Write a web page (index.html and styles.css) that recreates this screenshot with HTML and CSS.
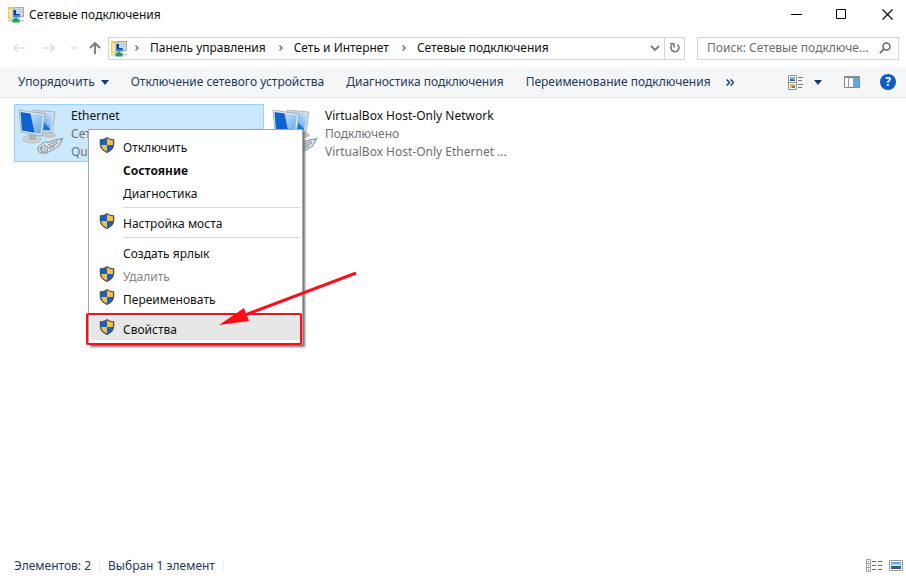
FILE: index.html
```html
<!DOCTYPE html>
<html lang="ru">
<head>
<meta charset="utf-8">
<title>Сетевые подключения</title>
<link rel="stylesheet" href="styles.css">
</head>
<body>
<svg class="defs" aria-hidden="true">
  <defs>
    <linearGradient id="screen" x1="0" y1="1" x2="1" y2="0">
      <stop offset="0" stop-color="#0b62d0"/><stop offset=".45" stop-color="#1a78df"/><stop offset=".5" stop-color="#7db9f3"/><stop offset="1" stop-color="#d4eaff"/>
    </linearGradient>
    <linearGradient id="pane" x1="0" y1="0" x2="1" y2="1">
      <stop offset="0" stop-color="#e4f2ff"/><stop offset="1" stop-color="#5ba4ee"/>
    </linearGradient>
    <linearGradient id="photo" x1="0" y1="0" x2="0" y2="1">
      <stop offset="0" stop-color="#3c96ee"/><stop offset=".5" stop-color="#c9e4fa"/><stop offset=".6" stop-color="#44586a"/><stop offset="1" stop-color="#1d5c92"/>
    </linearGradient>
    <symbol id="netfolder" viewBox="0 0 16 17">
      <path d="M0 1h5l1 1v11H0z" fill="#f3c463"/><path d="M1 3h3v9H1z" fill="#fde3a0"/>
      <path d="M6.500 1.500h9v9h-9z" fill="#d9d5c9" stroke="#a4a7a2"/><path d="M4 3h9v9H4z" fill="#c9cbc8"/>
      <path d="M5 4h7v7H5z" fill="#2f86df"/><path d="M6 4h5v5H6z" fill="#0d3f98"/><path d="M8 4h4v4H8z" fill="#b6dafa"/>
      <path d="M0 14h16v1.500H0z" fill="#c5cbc8"/><path d="M6.500 11.500h3v1.500h2V16.500h-7V13h2z" fill="#16a566"/>
    </symbol>
    <symbol id="shield" viewBox="0 0 16 16">
      <path d="M8 .8C6 2.300 3.800 2.800 1.400 2.900V7c0 4 2.800 6.800 6.600 8.300C11.800 13.800 14.600 11 14.600 7V2.900C12.200 2.800 10 2.300 8 .8z" fill="#ffbd38"/>
      <path d="M8 1v7H1.500V3C4 2.800 6 2.400 8 1zM8 8h6.500c-.4 3.500-3 6-6.500 7.200z" fill="#1063cc"/>
      <path d="M8 .8C6 2.300 3.800 2.800 1.400 2.900V7c0 4 2.800 6.800 6.600 8.300C11.800 13.800 14.600 11 14.600 7V2.900C12.200 2.800 10 2.300 8 .8z" fill="none" stroke="#4d5155" stroke-width="1.300"/>
    </symbol>
    <symbol id="computers" viewBox="0 0 48 48">
      <ellipse cx="31" cy="26" rx="7" ry="3" fill="#c4c8ca"/>
      <path d="M15 1l22 2-3 21-16-2z" fill="#d4dadd" stroke="#9aa5ad" stroke-width=".7"/><path d="M16 3l19 1.500-3 17-14-1z" fill="url(#screen)"/>
      <ellipse cx="14" cy="30" rx="9" ry="4" fill="#ccd0d1" stroke="#a2a8ab" stroke-width=".6"/><path d="M11 25l7 1v5h-7z" fill="#aeb6ba"/>
      <path d="M1 1l26 4-3 22L3 23z" fill="#e4e8ea" stroke="#8f9ba4" stroke-width=".7"/><path d="M2.500 3l22.500 3.300-2.500 18.500L4 21.500z" fill="url(#pane)"/><path d="M2.500 3l10 1.500 4 19.200L4 21.500z" fill="#0f62cf"/>
      <path d="M33 34l13-6-4 7-6 3z" fill="#58aef0"/>
      <path d="M20 38l6-5 5 0 9-3 4 1-3 6-12 7-7 0-2-3z" fill="#dde4e8" stroke="#7c878e" stroke-width=".9"/>
      <path d="M22 39l4-3 4 2-1 5-5 0zM30 36l10-4M31 38l9-4M31 40l6-3M24 38v4M27 38v4" fill="none" stroke="#7b8891" stroke-width=".9"/>
    </symbol>
    <symbol id="crumb" viewBox="0 0 6 8"><path d="M1.500 1.500L4 4 1.500 6.500" fill="none" stroke="#777" stroke-width="1.500"/></symbol>
    <symbol id="down" viewBox="0 0 8 5"><path d="M0 0h8L4 5z" fill="#173b70"/></symbol>
  </defs>
</svg>
<div class="window">
  <header class="titlebar">
    <svg class="folder"><use href="#netfolder"/></svg>
    <h1>Сетевые подключения</h1>
    <div class="caption">
      <button aria-label="Свернуть"><svg viewBox="0 0 11 11"><path d="M0 5.500h11" stroke="#000"/></svg></button>
      <button aria-label="Развернуть"><svg viewBox="0 0 11 11"><path d="M.5.5h9v9h-9z" fill="none" stroke="#000"/></svg></button>
      <button aria-label="Закрыть"><svg viewBox="0 0 11 11"><path d="M.5.5l10 10M10.500.5l-10 10" stroke="#000" stroke-width="1.200"/></svg></button>
    </div>
  </header>
  <nav class="navbar">
    <div class="history">
      <button aria-label="Назад" disabled><svg width="12" height="10" viewBox="0 0 12 10"><path d="M12 5H1M5 1L1 5l4 4" fill="none" stroke="#dfdfdf" stroke-width="1.600"/></svg></button>
      <button aria-label="Вперёд" disabled><svg width="12" height="10" viewBox="0 0 12 10"><path d="M0 5h11M7 1l4 4-4 4" fill="none" stroke="#dfdfdf" stroke-width="1.600"/></svg></button>
      <button class="recent" aria-label="Недавние" disabled><svg width="6" height="4" viewBox="0 0 6 4"><path d="M.5.5L3 3 5.500.5" fill="none" stroke="#ddd" stroke-width="1.300"/></svg></button>
      <button aria-label="Вверх"><svg width="12" height="12" viewBox="0 0 12 12"><path d="M6 12V1M1 6l5-5 5 5" fill="none" stroke="#777" stroke-width="1.800"/></svg></button>
    </div>
    <div class="address">
      <svg class="folder"><use href="#netfolder"/></svg>
      <svg class="crumb"><use href="#crumb"/></svg><a href="#">Панель управления</a>
      <svg class="crumb"><use href="#crumb"/></svg><a href="#">Сеть и Интернет</a>
      <svg class="crumb"><use href="#crumb"/></svg><a href="#">Сетевые подключения</a>
      <button class="expand" aria-label="Предыдущие расположения"><svg width="10" height="7" viewBox="0 0 10 7"><path d="M1 1l4 4 4-4" fill="none" stroke="#777" stroke-width="1.900"/></svg></button>
      <button class="refresh" aria-label="Обновить"><svg width="12" height="12" viewBox="0 0 12 12"><path d="M8.500 2.600A4 4 0 1 1 3 3" fill="none" stroke="#777" stroke-width="1.600"/><path d="M1 1.700h4v4" fill="none" stroke="#777" stroke-width="1.500"/></svg></button>
    </div>
    <div class="search">
      <input type="text" aria-label="Поиск" placeholder="Поиск: Сетевые подключе...">
      <svg width="12" height="12" viewBox="0 0 12 12"><circle cx="7.500" cy="4.500" r="3.500" fill="none" stroke="#666" stroke-width="1.500"/><path d="M5 7L.8 11.200" stroke="#666" stroke-width="1.700"/></svg>
    </div>
  </nav>
  <div class="toolbar">
    <button>Упорядочить<svg width="8" height="5"><use href="#down"/></svg></button>
    <button>Отключение сетевого устройства</button>
    <button>Диагностика подключения</button>
    <button>Переименование подключения</button>
    <button class="more" aria-label="Ещё"><svg width="8" height="7" viewBox="0 0 8 7"><path d="M.7.5l2.800 3-2.800 3M4.700.5l2.800 3-2.800 3" fill="none" stroke="#173b70" stroke-width="1.500"/></svg></button>
    <div class="tools">
      <button aria-label="Изменить представление"><svg width="16" height="15" viewBox="0 0 16 15"><path d="M.5.5h8v14h-8zM.5 7.500h8" fill="#fff" stroke="#929292"/><path d="M2 2h5v4H2z" fill="#72b5ea"/><path d="M2 4l5 1v1H2z" fill="#295b93"/><path d="M2 9h5v4H2z" fill="#e5b951"/><path d="M4 11h3v2H4z" fill="#43915a"/><path d="M10 2.500h5M10 5.500h4M10 9.500h5M10 12.500h4" stroke="#777"/></svg></button>
      <button class="viewdrop" aria-label="Другие представления"><svg width="8" height="5"><use href="#down"/></svg></button>
      <button aria-label="Область просмотра"><svg width="16" height="12" viewBox="0 0 16 12"><path d="M.5.5h15v11H.5z" fill="#fff" stroke="#858585"/><path d="M0 0h16v2H0z" fill="#8b8b8b"/><path d="M4.500 2v9M9.500 2v9" stroke="#999"/><path d="M10 2h5v9h-5z" fill="#5aa9f6"/></svg></button>
      <button class="help" aria-label="Справка"><span>?</span></button>
    </div>
  </div>
  <main class="content">
    <section class="item selected">
      <svg class="pc"><use href="#computers"/></svg>
      <div class="info"><h2>Ethernet</h2><p>Сеть</p><p>Qualcomm</p></div>
      <div class="menu" role="menu">
        <button role="menuitem"><svg><use href="#shield"/></svg>Отключить</button>
        <button role="menuitem" class="default">Состояние</button>
        <button role="menuitem">Диагностика</button>
        <hr>
        <button role="menuitem"><svg><use href="#shield"/></svg>Настройка моста</button>
        <hr>
        <button role="menuitem">Создать ярлык</button>
        <button role="menuitem" disabled><svg><use href="#shield"/></svg>Удалить</button>
        <button role="menuitem"><svg><use href="#shield"/></svg>Переименовать</button>
        <hr>
        <button role="menuitem" class="active"><svg><use href="#shield"/></svg>Свойства</button>
        <svg class="arrow" viewBox="0 0 138 54"><path d="M26 43L137 1" stroke="#ff0d17" stroke-width="3"/><path d="M0 53l25-17 5 13z" fill="#ff0d17"/></svg>
      </div>
    </section>
    <section class="item">
      <svg class="pc"><use href="#computers"/></svg>
      <div class="info"><h2>VirtualBox Host-Only Network</h2><p>Подключено</p><p>VirtualBox Host-Only Ethernet ...</p></div>
    </section>
  </main>
  <footer class="status">
    <span>Элементов: 2</span><span>Выбран 1 элемент</span>
    <div class="views">
      <button aria-label="Таблица"><svg width="16" height="13" viewBox="0 0 16 13"><path d="M.5.5h4v12h-4zM.5 4.500h4M.5 8.500h4" fill="#fff" stroke="#a0a0a0"/><path d="M2 2h1v1H2z" fill="#777"/><path d="M2 6h1v1H2z" fill="#3ca1e6"/><path d="M2 10h1v1H2z" fill="#e33"/><path d="M6 2.500h4M12 2.500h4M6 6.500h4M12 6.500h4M6 10.500h4M12 10.500h4" stroke="#666"/></svg></button>
      <button aria-label="Крупные значки"><svg width="14" height="11" viewBox="0 0 14 11"><path d="M.5.5h13v10H.5z" fill="#fff" stroke="#999"/><path d="M2 2h10v7H2z" fill="url(#photo)"/></svg></button>
    </div>
  </footer>
</div>
</body>
</html>
```
FILE: styles.css
```css
*, *::before, *::after { box-sizing: border-box; }
body { margin: 0; background: #fff; color: #111; font: 12px/18px "Noto Sans", "Open Sans", sans-serif; }
button { margin: 0; padding: 0; border: 0; background: none; color: inherit; font: inherit; display: flex; align-items: center; }
h1, h2, p { margin: 0; font: inherit; }
svg { display: block; flex: none; }
a { color: inherit; text-decoration: none; }
.defs { position: absolute; width: 0; height: 0; }
.window { min-height: 100vh; display: flex; flex-direction: column; }
.folder { width: 16px; height: 17px; }

.titlebar { display: flex; align-items: center; height: 29px; padding-left: 8px; gap: 5px; }
.caption { display: flex; margin-left: auto; }
.caption button { width: 45px; height: 29px; justify-content: center; }
.caption svg { width: 11px; height: 11px; }
.caption button:last-child { width: 38px; margin-left: 4px; }

.navbar { display: flex; align-items: center; height: 38px; padding: 0 7px 0 12px; }
.history { display: flex; align-items: center; gap: 18px; width: 96px; padding-left: 1px; }
.history .recent { margin: 0 -6px 0 -2px; }
.address, .search { display: flex; align-items: center; height: 23px; border: 1px solid #d5d5d5; background: #fff; }
.address { flex: 1; padding-left: 2px; min-width: 0; white-space: nowrap; }
.crumb { width: 6px; height: 8px; margin: 0 10px 0 12px; }
.address .folder + .crumb { margin-left: 7px; }
.expand { margin-left: auto; margin-right: 4px; }
.refresh { width: 20px; height: 21px; border-left: 1px solid #d5d5d5; justify-content: center; }
.search { width: 202px; margin-left: 12px; padding: 0 7px 0 9px; gap: 3px; }
.search input { flex: 1; min-width: 0; padding: 0; border: 0; outline: 0; background: none; font: inherit; text-overflow: ellipsis; }
.search input::placeholder { color: #6d6d6d; opacity: 1; }

.toolbar { display: flex; align-items: center; gap: 22px; height: 31px; padding: 0 10px 0 18px; background: #f5f6f7; border-bottom: 1px solid #e5e6e7; color: #1e395b; white-space: nowrap; }
.toolbar button { gap: 6px; }
.toolbar .more { margin-left: -7px; }
.tools { display: flex; align-items: center; margin-left: auto; gap: 20px; }
.tools .viewdrop { margin: 0 2px 0 -10px; }
.help span { width: 16px; height: 16px; border-radius: 50%; background: #0c5cc8; color: #fff; font-weight: 700; line-height: 16px; text-align: center; }

.content { flex: 1; display: flex; align-items: flex-start; gap: 4px; padding: 6px 14px; }
.item { position: relative; display: flex; gap: 5px; width: 250px; height: 58px; padding: 2px 3px; border: 1px solid transparent; }
.selected { background: #cce8ff; border-color: #99d1ff; z-index: 1; }
.pc { width: 48px; height: 48px; margin-top: 2px; }
.info { min-width: 0; white-space: nowrap; }
.info p { color: #707070; }

.menu { position: absolute; left: 73px; top: 24px; width: 215px; padding: 5px 2px 4px; background: #fff; border: 1px solid #a5a5a5; box-shadow: 2px 2px 2px #777; }
.menu button { width: 100%; height: 23px; padding: 2px 0 0 32px; }
.menu button svg { width: 16px; height: 16px; margin: 0 8px 5px -24px; }
.menu hr { height: 1px; margin: 3px 0 3px 32px; border: 0; background: #d7d7d7; }
.menu .default { font-weight: 700; }
.menu :disabled { color: #868686; }
.menu .active { background: #e6e7e6; }
.menu .active::after { content: ""; position: absolute; left: -3px; right: 0; bottom: -1px; height: 32px; border: 2px solid #ff0d17; border-radius: 2px; }
.arrow { position: absolute; left: 130px; top: 142px; width: 138px; height: 54px; }

.status { display: flex; align-items: center; height: 22px; padding: 1px 3px 0 14px; color: #1e395b; }
.status span { padding-right: 8px; margin-right: 8px; border-right: 1px solid #eee; line-height: 12px; }
.views { display: flex; align-items: center; gap: 7px; margin-left: auto; }
```
